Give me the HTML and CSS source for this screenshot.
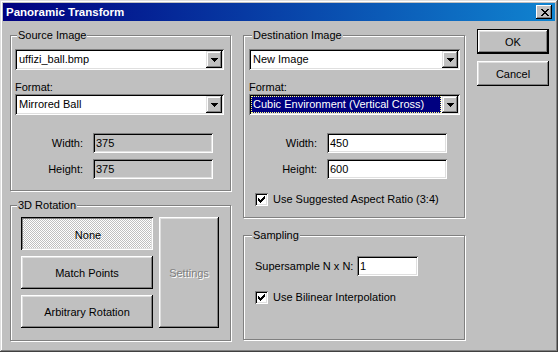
FILE: index.html
```html
<!DOCTYPE html>
<html>
<head>
<meta charset="utf-8">
<title>Panoramic Transform</title>
<link rel="stylesheet" href="styles.css">
</head>
<body>
<div class="window">
  <div class="titlebar">
    <span class="title">Panoramic Transform</span>
    <span class="close"><svg width="8" height="7" viewBox="0 0 8 7"><path d="M0 0h2v1H0zM6 0h2v1H6zM1 1h2v1H1zM5 1h2v1H5zM2 2h4v1H2zM3 3h2v1H3zM2 4h4v1H2zM1 5h2v1H1zM5 5h2v1H5zM0 6h2v1H0zM6 6h2v1H6z" fill="#000"/></svg></span>
  </div>
  <div class="content">
    <div class="col col-left">
      <div class="group g-source">
        <div class="legend">Source Image</div>
        <div class="combo c-src first">
          <div class="combo-text">uffizi_ball.bmp</div>
          <div class="combo-btn"><svg width="7" height="4" viewBox="0 0 7 4"><path d="M0 0h7v1H0zM1 1h5v1H1zM2 2h3v1H2zM3 3h1v1H3z" fill="#000"/></svg></div>
        </div>
        <div class="label">Format:</div>
        <div class="combo c-src">
          <div class="combo-text">Mirrored Ball</div>
          <div class="combo-btn"><svg width="7" height="4" viewBox="0 0 7 4"><path d="M0 0h7v1H0zM1 1h5v1H1zM2 2h3v1H2zM3 3h1v1H3z" fill="#000"/></svg></div>
        </div>
        <div class="field-row row-1"><span class="flabel">Width:</span><span class="edit ro">375</span></div>
        <div class="field-row row-2"><span class="flabel">Height:</span><span class="edit ro">375</span></div>
      </div>
      <div class="group g-rot">
        <div class="legend">3D Rotation</div>
        <div class="rot-grid">
          <div class="btn pressed"><span>None</span></div>
          <div class="btn">Match Points</div>
          <div class="btn">Arbitrary Rotation</div>
          <div class="btn disabled settings">Settings</div>
        </div>
      </div>
    </div>
    <div class="col col-mid">
      <div class="group g-dest">
        <div class="legend">Destination Image</div>
        <div class="combo c-dst first">
          <div class="combo-text">New Image</div>
          <div class="combo-btn"><svg width="7" height="4" viewBox="0 0 7 4"><path d="M0 0h7v1H0zM1 1h5v1H1zM2 2h3v1H2zM3 3h1v1H3z" fill="#000"/></svg></div>
        </div>
        <div class="label">Format:</div>
        <div class="combo c-dst">
          <div class="combo-text sel">Cubic Environment (Vertical Cross)</div>
          <div class="combo-btn"><svg width="7" height="4" viewBox="0 0 7 4"><path d="M0 0h7v1H0zM1 1h5v1H1zM2 2h3v1H2zM3 3h1v1H3z" fill="#000"/></svg></div>
        </div>
        <div class="field-row row-1"><span class="flabel">Width:</span><span class="edit">450</span></div>
        <div class="field-row row-2"><span class="flabel">Height:</span><span class="edit">600</span></div>
        <div class="check-row cr-dest">
          <span class="checkbox"><svg width="7" height="7" viewBox="0 0 7 7"><path d="M0 2h1v3H0zM1 3h1v3H1zM2 4h1v3H2zM3 3h1v3H3zM4 2h1v3H4zM5 1h1v3H5zM6 0h1v3H6z" fill="#000"/></svg></span>
          <span class="clabel">Use Suggested Aspect Ratio (3:4)</span>
        </div>
      </div>
      <div class="group g-samp">
        <div class="legend">Sampling</div>
        <div class="ss-row"><span class="sslabel">Supersample N x N:</span><span class="edit ss-edit">1</span></div>
        <div class="check-row cr-samp">
          <span class="checkbox"><svg width="7" height="7" viewBox="0 0 7 7"><path d="M0 2h1v3H0zM1 3h1v3H1zM2 4h1v3H2zM3 3h1v3H3zM4 2h1v3H4zM5 1h1v3H5zM6 0h1v3H6z" fill="#000"/></svg></span>
          <span class="clabel">Use Bilinear Interpolation</span>
        </div>
      </div>
    </div>
    <div class="col col-btns">
      <div class="btn btn-default">OK</div>
      <div class="btn btn-side">Cancel</div>
    </div>
  </div>
</div>
</body>
</html>
```

FILE: styles.css
```css
* { box-sizing: border-box; }

body {
  margin: 0;
  background: #c0c0c0;
  font-family: "Liberation Sans", Arial, sans-serif;
  font-size: 11px;
  color: #000;
}

.window {
  width: 558px;
  height: 352px;
  padding: 3px;
  background: #c0c0c0;
  box-shadow: inset -1px -1px #404040, inset 1px 1px #dfdfdf, inset -2px -2px #808080, inset 2px 2px #fff;
}

.titlebar {
  height: 18px;
  display: flex;
  align-items: center;
  justify-content: space-between;
  padding: 0 3px;
  background: linear-gradient(90deg, #000080, #1084d0);
}

.title {
  color: #fff;
  font-weight: bold;
  font-size: 11.5px;
  line-height: 18px;
}

.close {
  width: 16px;
  height: 14px;
  display: flex;
  align-items: center;
  justify-content: center;
  padding: 1px 0 0 1px;
  background: #c0c0c0;
  box-shadow: inset -1px -1px #000, inset 1px 1px #fff, inset -2px -2px #808080;
}
.close svg, .combo-btn svg, .checkbox svg { display: block; }

.content {
  display: flex;
  gap: 12px;
  padding: 8px 0 0 7px;
}

.col { display: flex; flex-direction: column; }
.col-left { width: 221px; padding-top: 6px; }
.col-mid { width: 222px; padding-top: 6px; }
.col-btns { width: 72px; gap: 7px; }

.group {
  display: flex;
  flex-direction: column;
  align-items: flex-start;
  border: 1px solid #808080;
  box-shadow: inset 1px 1px #fff, 1px 1px #fff;
}
.g-source { height: 156px; }
.g-rot { height: 136px; margin-top: 14px; }
.g-dest { height: 183px; }
.g-samp { height: 105px; margin-top: 17px; }

.legend {
  margin: -7px 0 0 6px;
  padding: 0 1px;
  height: 13px;
  line-height: 13px;
  background: #c0c0c0;
}
.col-mid .legend { margin-left: 8px; }

.combo {
  height: 21px;
  display: flex;
  padding: 2px;
  background: #fff;
  box-shadow: inset 1px 1px #808080, inset -1px -1px #fff, inset 2px 2px #000, inset -2px -2px #dfdfdf;
}
.combo.first { margin-top: 7px; }
.c-src { margin-left: 4px; width: 209px; }
.c-dst { margin-left: 5px; width: 211px; }

.combo-text {
  flex: 1;
  padding-left: 2px;
  line-height: 17px;
  white-space: nowrap;
  overflow: hidden;
}
.combo-text.sel {
  background: #000080;
  color: #fff;
  outline: 1px dotted #ffff80;
  outline-offset: -1px;
  margin-right: 1px;
}

.combo-btn {
  width: 16px;
  height: 17px;
  display: flex;
  align-items: center;
  justify-content: center;
  padding: 1px 0 0 0;
  background: #c0c0c0;
  box-shadow: inset -1px -1px #000, inset 1px 1px #dfdfdf, inset -2px -2px #808080, inset 2px 2px #fff;
}

.label {
  margin: 11px 0 0 4px;
  height: 13px;
  line-height: 13px;
}
.col-mid .label { margin-left: 5px; }

.field-row { display: flex; margin-left: 4px; }
.col-mid .field-row { margin-left: 5px; }
.row-1 { margin-top: 18px; }
.row-2 { margin-top: 6px; }

.flabel {
  width: 68px;
  text-align: right;
  line-height: 20px;
}

.edit {
  height: 20px;
  line-height: 16px;
  padding: 2px 3px;
  background: #fff;
  box-shadow: inset 1px 1px #808080, inset -1px -1px #fff, inset 2px 2px #000, inset -2px -2px #dfdfdf;
}
.field-row .edit { width: 120px; margin-left: 10px; }
.edit.ro { background: #c0c0c0; }

.check-row { display: flex; align-items: center; margin-left: 11px; }
.cr-dest { margin-top: 14px; }
.cr-samp { margin-top: 15px; }

.checkbox {
  width: 13px;
  height: 13px;
  display: flex;
  align-items: center;
  justify-content: center;
  background: #fff;
  box-shadow: inset 1px 1px #808080, inset -1px -1px #fff, inset 2px 2px #000, inset -2px -2px #dfdfdf;
}
.clabel { margin-left: 5px; line-height: 13px; }

.ss-row { display: flex; margin: 14px 0 0 11px; }
.sslabel { width: 102px; line-height: 20px; white-space: nowrap; }
.ss-edit { width: 61px; }

.rot-grid {
  display: grid;
  grid-template-columns: 132px 60px;
  grid-template-rows: 33px 33px 33px;
  gap: 6px;
  margin: 5px 0 0 10px;
}

.btn {
  display: flex;
  align-items: center;
  justify-content: center;
  background: #c0c0c0;
  box-shadow: inset -1px -1px #000, inset 1px 1px #fff, inset -2px -2px #808080, inset 2px 2px #dfdfdf;
  white-space: nowrap;
}
.btn.pressed {
  background: repeating-conic-gradient(#fff 0 25%, #c0c0c0 0 50%) 0 0 / 2px 2px;
  box-shadow: inset 1px 1px #000, inset -1px -1px #fff, inset 2px 2px #808080, inset -2px -2px #dfdfdf;
}
.btn.pressed span { position: relative; top: 1px; left: 1px; background: transparent; }
.settings { grid-column: 2; grid-row: 1 / 4; }
.btn.disabled { color: #808080; text-shadow: 1px 1px #fff; }

.btn-default {
  height: 25px;
  border: 1px solid #000;
}
.btn-side { height: 25px; }
```
